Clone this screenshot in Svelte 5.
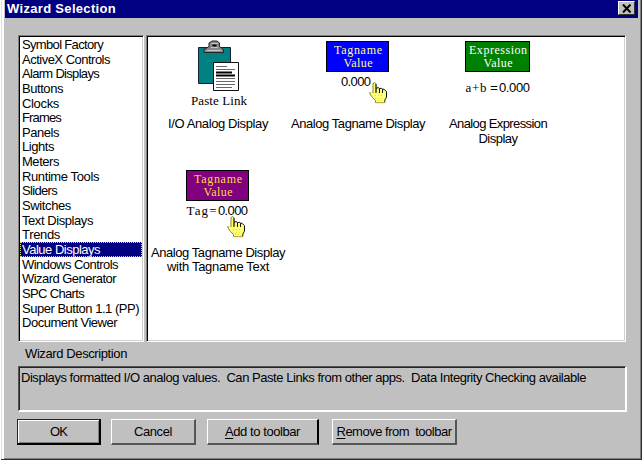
<script>
  let categories = [
    { name: 'Symbol Factory', width: 81 },
    { name: 'ActiveX Controls', width: 88 },
    { name: 'Alarm Displays', width: 77 },
    { name: 'Buttons', width: 41 },
    { name: 'Clocks', width: 37 },
    { name: 'Frames', width: 39 },
    { name: 'Panels', width: 37 },
    { name: 'Lights', width: 32 },
    { name: 'Meters', width: 37 },
    { name: 'Runtime Tools', width: 77 },
    { name: 'Sliders', width: 35 },
    { name: 'Switches', width: 49 },
    { name: 'Text Displays', width: 71 },
    { name: 'Trends', width: 38 },
    { name: 'Value Displays', width: 78 },
    { name: 'Windows Controls', width: 96 },
    { name: 'Wizard Generator', width: 94 },
    { name: 'SPC Charts', width: 62 },
    { name: 'Super Button 1.1 (PP)', width: 117 },
    { name: 'Document Viewer', width: 95 }
  ];

  let wizards = [
    { icon: 'paste', lines: [{ text: 'I/O Analog Display', width: 100 }] },
    { icon: 'tag', lines: [{ text: 'Analog Tagname Display', width: 134 }] },
    {
      icon: 'expression',
      lines: [{ text: 'Analog Expression', width: 98 }, { text: 'Display', width: 39 }]
    },
    {
      icon: 'tagText',
      lines: [{ text: 'Analog Tagname Display', width: 134 }, { text: 'with Tagname Text', width: 102 }]
    }
  ];

  let selected = $state('Value Displays');

  // spread the letters so that a label takes its bitmap font width
  function fit(node, width) {
    const natural = node.getBoundingClientRect().width;
    const spacing = (width - natural) / node.textContent.length;
    node.style.letterSpacing = `${spacing}px`;
  }
</script>

{#snippet hand(x, y)}
  <svg {x} {y} width="19" height="22" viewBox="0 0 19 22">
    <path
      d="M4 1.5 5.5 .7 7 1.5V6.5L8.5 5.7 10 7 11.5 6.2 13 7.5 14.5 6.8 16.5 8.5 17.5 10V15L15.8 18V20.5H6.5V18.5L3.5 15.5 1 12V10H2.8L4 11Z"
      fill="#ffff72"
    />
    <path d="M4 11V1.5L5.5 .7 7 1.5V10M1 10v2l2.5 3.5 3 3v2" fill="none" stroke="#8a8426" />
    <path d="M7 2v9M7 6.5l2-1 1.5 1V11M10.5 6.7l2-.5 1 1V11M13.5 7.2h1.5l2.5 2.5v5.5l-1.7 3v2.3" fill="none" stroke="#111" />
    <path d="M6.5 20.7h9.5" stroke="#aa9e28" />
    <path d="M6 13.5h9M6 16.5h8M8 18.5h6" stroke="#e5da51" stroke-dasharray="1 2" />
  </svg>
{/snippet}

{#snippet plate(x, width, fill, color, title, titleWidth)}
  <rect x={x + 0.5} y="1.5" {width} height="30" {fill} stroke="#000" />
  <text class="serif caption" x="70" y="14" fill={color} textLength={titleWidth}>{title}</text>
  <text class="serif caption" x="70" y="27" fill={color} textLength="29">Value</text>
{/snippet}

<div class="dialog">
  <header>
    <h1><span use:fit={109}>Wizard Selection</span></h1>
    <button class="close" aria-label="Close">
      <svg width="10" height="9" viewBox="0 0 10 9">
        <path d="M1 .5 8.5 8.5M8.5 .5 1 8.5" stroke="#000" stroke-width="2" />
      </svg>
    </button>
  </header>

  <main>
    <div class="lists">
      <ul class="categories sunken">
        {#each categories as item}
          <li>
            <button class:selected={selected === item.name} onclick={() => (selected = item.name)}>
              <span use:fit={item.width}>{item.name}</span>
            </button>
          </li>
        {/each}
      </ul>

      <div class="wizards sunken">
        {#each wizards as wizard}
          <div class="wizard">
            <svg width="140" height="75" viewBox="0 0 140 75">
              {#if wizard.icon === 'paste'}
                <path d="M50.5 7.5H82.5V43.5H50.5Z" fill="#008080" stroke="#123" />
                <path d="M61 6.5V3l3-2h5l2.5 2v3.5l4 3v3H56v-3l5-3Z" fill="#888" stroke="#222" />
                <path d="M63.5 3.5h6M63 7.5h7M59 10.5h14" stroke="#c6c6c6" />
                <path d="M64.5 5.5h4" stroke="#000" stroke-width="2" />
                <path d="M65.5 22.5H90.5V50.5H65.5Z" fill="#fff" stroke="#111" />
                <path d="M68 26.5h11M68 29.5h19M68 38.5h19M68 41.5h19M68 44.5h19M68 47.5h16" stroke="#666" />
                <path d="M68 32.5h16M68 35.5h19" stroke="#000" stroke-width="2" />
                <text class="serif" x="71" y="64.5" textLength="56">Paste Link</text>
              {:else if wizard.icon === 'tag'}
                {@render plate(38, 62, '#0000ff', '#ffff80', 'Tagname', 48)}
                <text x="68" y="46" textLength="30">0.000</text>
                {@render hand(81, 42)}
              {:else if wizard.icon === 'expression'}
                {@render plate(37, 64, '#008000', '#fff', 'Expression', 58)}
                <text class="serif" x="48" y="51.5" textLength="21">a+b</text>
                <text x="66" y="52" textLength="8">=</text>
                <text x="86.5" y="52" textLength="31">0.000</text>
              {:else}
                {@render plate(38, 62, '#800080', '#ffd83c', 'Tagname', 48)}
                <text class="serif" x="53.5" y="45.5" textLength="30">Tag=</text>
                <text x="85" y="46" textLength="30">0.000</text>
                {@render hand(79, 47)}
              {/if}
            </svg>
            <p>
              {#each wizard.lines as line}
                <span class="line"><span use:fit={line.width}>{line.text}</span></span>
              {/each}
            </p>
          </div>
        {/each}
      </div>
    </div>

    <h2><span use:fit={102}>Wizard Description</span></h2>
    <div class="description">
      <span use:fit={565}>Displays formatted I/O analog values.&nbsp; Can Paste Links from other apps.&nbsp; Data Integrity Checking available</span>
    </div>

    <footer>
      <button class="push ok"><span use:fit={17}>OK</span></button>
      <button class="push cancel"><span use:fit={38}>Cancel</span></button>
      <button class="push add"><span use:fit={75}><u>A</u>dd to toolbar</span></button>
      <button class="push remove"><span use:fit={115}><u>R</u>emove from&nbsp; toolbar</span></button>
    </footer>
  </main>
</div>

<style>
  :global(body) {
    margin: 0;
    background: #fff;
    overflow: hidden;
  }

  .dialog {
    box-sizing: border-box;
    width: 641px;
    height: 460px;
    margin-left: 1px;
    padding: 0 3px 0 1px;
    border: solid #2b2b2b;
    border-width: 0 1px 1px 0;
    box-shadow: inset 1px 0 #dfdfdf, inset 3px 0 #fff, inset -1px -1px #808080;
    background: #c0c0c0;
    font-family: 'Liberation Sans', Arial, sans-serif;
    font-size: 13px;
    color: #000;
  }

  h1,
  h2,
  p,
  ul {
    margin: 0;
    padding: 0;
    font-weight: normal;
  }

  button {
    padding: 0;
    border: 0;
    font: inherit;
    color: inherit;
    background: none;
  }

  span {
    white-space: nowrap;
  }

  header {
    display: flex;
    justify-content: space-between;
    height: 18px;
    margin-left: 3px;
    background: #000080;
    color: #fff;
  }

  h1 {
    padding-left: 2px;
    font-size: 13px;
    font-weight: bold;
    line-height: 17px;
  }

  .close {
    display: flex;
    align-items: center;
    justify-content: center;
    box-sizing: border-box;
    width: 17px;
    height: 14px;
    margin: 1px 3px 0 0;
    border: solid;
    border-width: 1px;
    border-color: #fff #333 #333 #fff;
    background: #c0c0c0;
  }

  main {
    padding: 17px 12px 0 16px;
  }

  .lists {
    display: flex;
    gap: 2px;
  }

  .sunken {
    box-sizing: border-box;
    height: 307px;
    border: 1px solid;
    border-color: #808080 #fff #fff #808080;
    box-shadow: inset 1px 1px #000, inset -1px -1px #d0d0d0;
    background: #fff;
  }

  .categories {
    width: 126px;
    padding: 1px;
    list-style: none;
  }

  .categories li {
    height: 14.65px;
  }

  .categories button {
    display: block;
    width: 100%;
    height: 15px;
    padding-left: 2px;
    line-height: 16px;
    text-align: left;
  }

  .categories .selected {
    background: #000080;
    color: #fff;
    outline: 1px dotted #d8d860;
    outline-offset: -1px;
  }

  .wizards {
    display: grid;
    grid-template-columns: repeat(3, 140px);
    grid-auto-rows: 128.5px;
    align-content: start;
    width: 480px;
    padding: 4px 0 0 1px;
  }

  .wizard svg {
    display: block;
  }

  text {
    text-anchor: middle;
    font-size: 13px;
  }

  .serif {
    font-family: 'Liberation Serif', 'Times New Roman', serif;
  }

  .caption {
    font-size: 12px;
  }

  .wizard p {
    padding-top: 2px;
    line-height: 14.5px;
    text-align: center;
  }

  .line {
    display: block;
  }

  h2 {
    padding-left: 7px;
    font-size: 13px;
    line-height: 24px;
  }

  .description {
    box-sizing: border-box;
    width: 609px;
    height: 46px;
    padding: 2px 2px;
    border: solid;
    border-width: 1px 2px 2px 1px;
    border-color: #555 #fff #fff #555;
    box-shadow: inset 1px 1px #222;
    line-height: 17px;
  }

  footer {
    display: flex;
    margin: 7px 0 0 -1px;
  }

  .push {
    box-sizing: border-box;
    height: 26px;
    border: solid;
    border-width: 1px 2px 2px 1px;
    border-color: #fff #555 #555 #fff;
    line-height: 23px;
  }

  .ok {
    width: 84px;
    border-color: #222 #000 #000 #222;
    box-shadow: inset 1px 1px #fff, inset -1px -1px #808080;
  }

  .cancel {
    width: 85px;
    margin-left: 10px;
  }

  .add {
    width: 112px;
    margin-left: 11px;
    border-right-color: #000;
  }

  .remove {
    width: 125px;
    margin-left: 13px;
  }

  u {
    text-underline-offset: 2px;
  }
</style>
